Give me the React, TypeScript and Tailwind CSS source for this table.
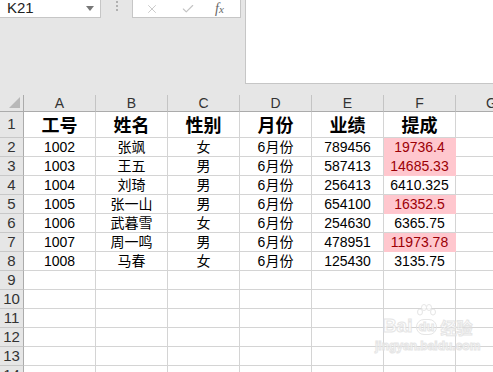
import { Check, X } from "lucide-react";

type Row = {
  id: string;
  name: string;
  sex: string;
  month: string;
  sales: string;
  bonus: string;
  hot: boolean;
};

const rows: Row[] = [
  { id: "1002", name: "张飒", sex: "女", month: "6月份", sales: "789456", bonus: "19736.4", hot: true },
  { id: "1003", name: "王五", sex: "男", month: "6月份", sales: "587413", bonus: "14685.33", hot: true },
  { id: "1004", name: "刘琦", sex: "男", month: "6月份", sales: "256413", bonus: "6410.325", hot: false },
  { id: "1005", name: "张一山", sex: "男", month: "6月份", sales: "654100", bonus: "16352.5", hot: true },
  { id: "1006", name: "武暮雪", sex: "女", month: "6月份", sales: "254630", bonus: "6365.75", hot: false },
  { id: "1007", name: "周一鸣", sex: "男", month: "6月份", sales: "478951", bonus: "11973.78", hot: true },
  { id: "1008", name: "马春", sex: "女", month: "6月份", sales: "125430", bonus: "3135.75", hot: false },
];

const letters = ["A", "B", "C", "D", "E", "F", "G"];
const titles = ["工号", "姓名", "性别", "月份", "业绩", "提成"];

function RowHead({ n, tall }: { n: number; tall?: boolean }) {
  return (
    <div
      className={`flex w-[24px] shrink-0 items-center justify-center border-r border-b border-r-[#ababab] border-b-[#c8c8c8] bg-[#e6e6e6] text-[15px] text-[#333] ${
        tall ? "h-[26px]" : "h-[19px]"
      }`}
    >
      {n}
    </div>
  );
}

function Cell({ children, hot, tall }: { children?: React.ReactNode; hot?: boolean; tall?: boolean }) {
  return (
    <div
      className={`flex w-[72px] shrink-0 items-center justify-center whitespace-nowrap border-r border-b ${
        tall ? "h-[26px]" : "h-[19px]"
      } ${hot ? "border-[#ffc7ce] bg-[#ffc7ce] text-[#9c0006]" : "border-[#d4d4d4] bg-white text-black"}`}
    >
      {children}
    </div>
  );
}

function FormulaBar() {
  return (
    <div className="flex h-[95px] bg-[#e6e6e6]">
      <div className="flex h-[18px] w-[101px] items-center justify-between border-r border-b border-[#c6c6c6] bg-white pl-[7px] pr-[6px]">
        <span className="text-[15px] text-[#222]">K21</span>
        <span className="h-0 w-0 border-x-[4px] border-t-[5px] border-x-transparent border-t-[#777]" />
      </div>
      <div className="flex w-[31px] flex-col items-center gap-[2px] pt-[1px]">
        <span className="h-[2px] w-[2px] bg-[#b0b0b0]" />
        <span className="h-[2px] w-[2px] bg-[#b0b0b0]" />
        <span className="h-[2px] w-[2px] bg-[#b0b0b0]" />
      </div>
      <div className="flex h-[18px] w-[109px] items-center border-r border-b border-l border-[#c6c6c6] bg-white">
        <X className="ml-[12px] h-[14px] w-[14px] text-[#c4c4c4]" strokeWidth={1.5} />
        <Check className="ml-[22px] h-[14px] w-[14px] text-[#c4c4c4]" strokeWidth={2} />
        <span className="ml-[20px] font-['Liberation_Serif',serif] text-[14px] italic text-[#666]">
          f<span className="text-[11px]">x</span>
        </span>
      </div>
      <div className="ml-[4px] h-[84px] flex-1 border-b border-l border-[#c6c6c6] bg-white" />
    </div>
  );
}

// faint site stamp in the lower right corner
function Watermark() {
  return (
    <div className="pointer-events-none absolute left-[375px] top-[316px] flex flex-col items-center font-['Liberation_Sans',sans-serif] text-white opacity-80 [-webkit-text-stroke:1px_#e0e0e0]">
      <div className="flex items-end">
        <span className="text-[19px] font-bold leading-none">Bai</span>
        <span className="relative mx-[1px] flex h-[17px] w-[26px] items-center justify-center">
          <svg className="absolute -top-[14px] left-[3px]" width="20" height="14" viewBox="0 0 20 14" fill="white" stroke="#e0e0e0">
            <ellipse cx="4" cy="8" rx="2.5" ry="3" />
            <ellipse cx="8" cy="3.5" rx="2.5" ry="3" />
            <ellipse cx="13" cy="3.5" rx="2.5" ry="3" />
            <ellipse cx="17" cy="8" rx="2.5" ry="3" />
          </svg>
          <span className="rounded-[8px] border border-[#e0e0e0] px-[2px] text-[13px] font-bold leading-[14px]">du</span>
        </span>
        <span className="font-['Noto_Sans_CJK_SC',sans-serif] text-[16px] font-bold leading-none">经验</span>
      </div>
      <span className="mt-[5px] text-[12px] font-bold leading-none">jingyan.baidu.com</span>
    </div>
  );
}

export default function App() {
  return (
    <div className="relative h-[372px] w-[493px] overflow-hidden bg-white font-['Liberation_Sans','Noto_Sans_CJK_SC',sans-serif] text-[14px]">
      <FormulaBar />

      {/* column letters */}
      <div className="flex h-[17px]">
        <div className="relative w-[24px] shrink-0 border-r border-b border-[#ababab] bg-[#e6e6e6]">
          <span className="absolute right-[3px] bottom-[3px] h-0 w-0 border-l-[11px] border-t-[11px] border-l-transparent border-t-transparent border-r-0 border-b-0 [border-bottom:11px_solid_#b8b8b8]" />
        </div>
        {letters.map((l) => (
          <div
            key={l}
            className="flex w-[72px] shrink-0 items-center justify-center border-r border-b border-r-[#c4c4c4] border-b-[#ababab] bg-[#e6e6e6] text-[14px] text-[#333]"
          >
            {l}
          </div>
        ))}
      </div>

      {/* header row */}
      <div className="flex">
        <RowHead n={1} tall />
        {titles.map((t) => (
          <Cell key={t} tall>
            <span className="font-['Noto_Sans_CJK_SC',sans-serif] text-[18px] font-bold">{t}</span>
          </Cell>
        ))}
        <Cell tall />
      </div>

      {rows.map((r, i) => (
        <div key={r.id} className="flex">
          <RowHead n={i + 2} />
          <Cell>{r.id}</Cell>
          <Cell>{r.name}</Cell>
          <Cell>{r.sex}</Cell>
          <Cell>{r.month}</Cell>
          <Cell>{r.sales}</Cell>
          <Cell hot={r.hot}>{r.bonus}</Cell>
          <Cell />
        </div>
      ))}

      {[9, 10, 11, 12, 13, 14].map((n) => (
        <div key={n} className="flex">
          <RowHead n={n} />
          {letters.map((l) => (
            <Cell key={l} />
          ))}
        </div>
      ))}

      <Watermark />
    </div>
  );
}
